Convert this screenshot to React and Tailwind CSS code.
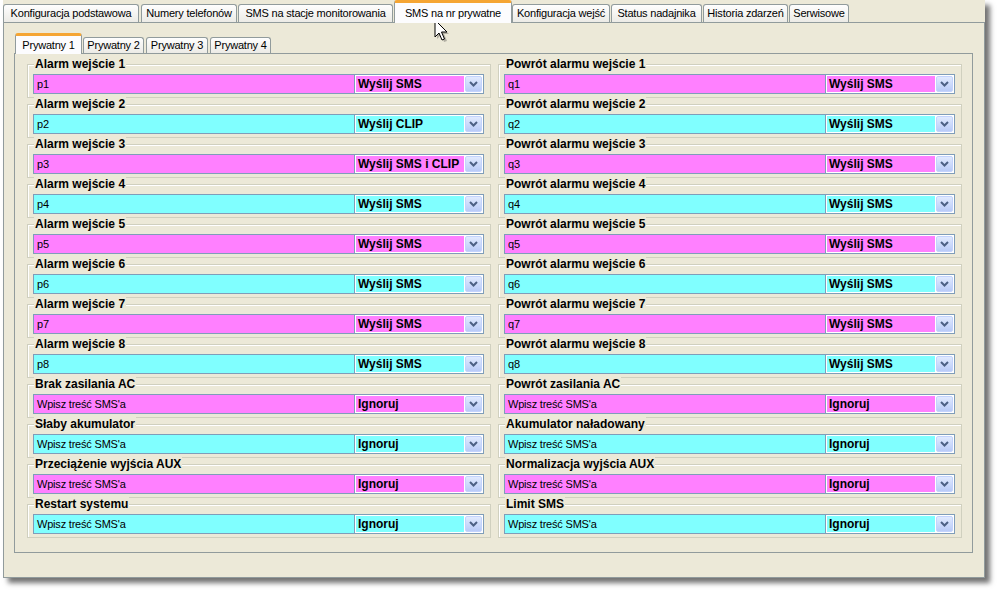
import React from "react";

const topTabs = [
  { label: "Konfiguracja podstawowa", w: "w-[136px]", ml: "ml-0" },
  { label: "Numery telefonów", w: "w-[96px]", ml: "ml-[2px]" },
  { label: "SMS na stacje monitorowania", w: "w-[155px]", ml: "ml-[1px]" },
  { label: "SMS na nr prywatne", w: "w-[118px]", ml: "ml-[1px]", active: true },
  { label: "Konfiguracja wejść", w: "w-[98px]", ml: "ml-0" },
  { label: "Status nadajnika", w: "w-[91px]", ml: "ml-[1px]" },
  { label: "Historia zdarzeń", w: "w-[85px]", ml: "ml-[1px]" },
  { label: "Serwisowe", w: "w-[60px]", ml: "ml-[1px]" },
];

const subTabs = [
  { label: "Prywatny 1", w: "w-[67px]", ml: "ml-[1px]", active: true },
  { label: "Prywatny 2", w: "w-[61px]", ml: "ml-[1px]" },
  { label: "Prywatny 3", w: "w-[62px]", ml: "ml-[2px]" },
  { label: "Prywatny 4", w: "w-[61px]", ml: "ml-[2px]" },
];

const EMPTY = "Wpisz treść SMS'a";

const leftGroups = [
  ["Alarm wejście 1", "p1", "Wyślij SMS"],
  ["Alarm wejście 2", "p2", "Wyślij CLIP"],
  ["Alarm wejście 3", "p3", "Wyślij SMS i CLIP"],
  ["Alarm wejście 4", "p4", "Wyślij SMS"],
  ["Alarm wejście 5", "p5", "Wyślij SMS"],
  ["Alarm wejście 6", "p6", "Wyślij SMS"],
  ["Alarm wejście 7", "p7", "Wyślij SMS"],
  ["Alarm wejście 8", "p8", "Wyślij SMS"],
  ["Brak zasilania AC", EMPTY, "Ignoruj"],
  ["Słaby akumulator", EMPTY, "Ignoruj"],
  ["Przeciążenie wyjścia AUX", EMPTY, "Ignoruj"],
  ["Restart systemu", EMPTY, "Ignoruj"],
];

const rightGroups = [
  ["Powrót alarmu wejście 1", "q1", "Wyślij SMS"],
  ["Powrót alarmu wejście 2", "q2", "Wyślij SMS"],
  ["Powrót alarmu wejście 3", "q3", "Wyślij SMS"],
  ["Powrót alarmu wejście 4", "q4", "Wyślij SMS"],
  ["Powrót alarmu wejście 5", "q5", "Wyślij SMS"],
  ["Powrót alarmu wejście 6", "q6", "Wyślij SMS"],
  ["Powrót alarmu wejście 7", "q7", "Wyślij SMS"],
  ["Powrót alarmu wejście 8", "q8", "Wyślij SMS"],
  ["Powrót zasilania AC", EMPTY, "Ignoruj"],
  ["Akumulator naładowany", EMPTY, "Ignoruj"],
  ["Normalizacja wyjścia AUX", EMPTY, "Ignoruj"],
  ["Limit SMS", EMPTY, "Ignoruj"],
];

function Chevron() {
  return (
    <svg width="9" height="6" viewBox="0 0 9 6">
      <path d="M1 1 L4.5 4.5 L8 1" fill="none" stroke="#4d6185" strokeWidth="2" />
    </svg>
  );
}

function Combo({ value, pink }) {
  return (
    <div className="w-[130px] h-[20px] border border-[#7f9db9] bg-white flex items-stretch p-[1px] gap-[1px]">
      <div
        className={
          "flex-1 flex items-center pl-[2px] text-[12px] font-bold text-black leading-none whitespace-nowrap overflow-hidden " +
          (pink ? "bg-[#ff80ff]" : "bg-[#80ffff]")
        }
      >
        {value}
      </div>
      <div className="w-[17px] rounded-[2px] border border-[#c3d3fd] bg-gradient-to-b from-[#e1eafe] to-[#b9cbf7] flex items-center justify-center">
        <Chevron />
      </div>
    </div>
  );
}

function Group({ title, text, value, pink }) {
  return (
    <div className="h-[40px] pt-[7px]">
      <div className="relative h-[34px] border border-[#d0d0bf] shadow-[inset_1px_1px_0_#fff] pl-[5px] pr-[6px] pt-[9px] flex">
        <span className="absolute left-[6px] -top-[8px] px-[1px] bg-[#ece9d8] text-[12px] font-bold leading-[14px] text-black whitespace-nowrap">
          {title}
        </span>
        <div
          className={
            "w-[321px] h-[20px] border border-r-0 border-[#7f9db9] flex items-center pl-[3px] text-[11px] tracking-[-0.2px] text-black " +
            (pink ? "bg-[#ff80ff]" : "bg-[#80ffff]")
          }
        >
          {text}
        </div>
        <Combo value={value} pink={pink} />
      </div>
    </div>
  );
}

function Cursor() {
  return (
    <svg className="absolute left-[434px] top-[19px]" width="16" height="24" viewBox="0 0 16 24">
      <path d="M3 3 L3 20 L7 16 L10 23 L13 22 L10 15 L15 15 Z" fill="rgba(0,0,0,0.25)" />
      <path d="M1 1 L1 18 L5 14 L8 21 L10.5 20 L7.5 13 L13 13 Z" fill="white" stroke="black" strokeWidth="1" strokeLinejoin="miter" />
    </svg>
  );
}

export default function App() {
  return (
    <div className="relative w-[1001px] h-[593px] bg-white overflow-hidden font-['Liberation_Sans',Arial,sans-serif]">
      <div className="ml-[3px] w-[982px] h-[578px] bg-[#ece9d8] shadow-[5px_5px_5px_rgba(0,0,0,0.55)] flex flex-col">
        {/* main tabs */}
        <div className="h-[22px] flex items-end shrink-0">
          {topTabs.map((t) =>
            t.active ? (
              <div
                key={t.label}
                className={`${t.ml} ${t.w} relative z-10 h-[23px] -mb-[1px] bg-[#fcfcfe] border-x border-[#919b9c] border-t-[3px] border-t-[#f5a533] rounded-t-[3px] flex items-center justify-center text-[11px] tracking-[-0.2px] text-black whitespace-nowrap`}
              >
                {t.label}
              </div>
            ) : (
              <div
                key={t.label}
                className={`${t.ml} ${t.w} h-[18px] bg-gradient-to-b from-[#fefefe] to-[#ecebe6] border-x border-t border-[#919b9c] rounded-t-[3px] flex items-center justify-center text-[11px] tracking-[-0.2px] text-black whitespace-nowrap`}
              >
                {t.label}
              </div>
            )
          )}
        </div>

        {/* main panel */}
        <div className="flex-1 border border-[#919b9c] pl-[10px] pr-[11px] pb-[24px] flex flex-col">
          <div className="h-[30px] flex items-end shrink-0">
            {subTabs.map((t) =>
              t.active ? (
                <div
                  key={t.label}
                  className={`${t.ml} ${t.w} relative z-10 h-[21px] -mb-[1px] bg-[#fcfcfe] border-x border-[#919b9c] border-t-[3px] border-t-[#f5a533] rounded-t-[3px] flex items-center justify-center text-[11px] tracking-[-0.2px] text-black whitespace-nowrap`}
                >
                  {t.label}
                </div>
              ) : (
                <div
                  key={t.label}
                  className={`${t.ml} ${t.w} h-[16px] bg-gradient-to-b from-[#fefefe] to-[#ecebe6] border-x border-t border-[#919b9c] rounded-t-[3px] flex items-center justify-center text-[11px] tracking-[-0.2px] text-black whitespace-nowrap`}
                >
                  {t.label}
                </div>
              )
            )}
          </div>

          <div className="flex-1 border border-[#919b9c] pt-[3px] pl-[12px] pr-[10px] flex gap-[7px]">
            <div className="w-[464px] flex flex-col">
              {leftGroups.map(([title, text, value], i) => (
                <Group key={title} title={title} text={text} value={value} pink={i % 2 === 0} />
              ))}
            </div>
            <div className="w-[464px] flex flex-col">
              {rightGroups.map(([title, text, value], i) => (
                <Group key={title} title={title} text={text} value={value} pink={i % 2 === 0} />
              ))}
            </div>
          </div>
        </div>
      </div>
      <Cursor />
    </div>
  );
}
